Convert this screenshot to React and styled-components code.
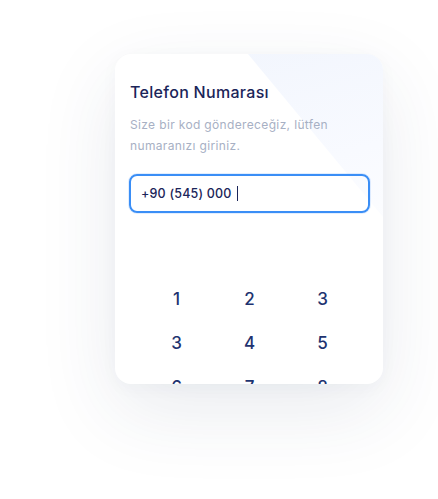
import React from "react";
import styled, { createGlobalStyle } from "styled-components";

const Global = createGlobalStyle`
  html, body { margin: 0; padding: 0; background: #ffffff; }
  body { font-family: "Inter", "Noto Sans", sans-serif; -webkit-font-smoothing: antialiased; }
`;

const Stage = styled.div`
  width: 438px;
  height: 499px;
  box-sizing: border-box;
  padding: 54px 0 0 115px;
  overflow: hidden;
`;

const Card = styled.div`
  position: relative;
  width: 268px;
  height: 330px;
  box-sizing: border-box;
  padding: 28px 13px 0 14px;
  background: #ffffff;
  border-radius: 16px;
  box-shadow: 0 26px 80px rgba(40, 55, 100, 0.1), 0 4px 18px rgba(40, 55, 100, 0.03);
  overflow: hidden;
  display: flex;
  flex-direction: column;

  &::before {
    content: "";
    position: absolute;
    inset: 0;
    clip-path: polygon(133px 0, 100% 0, 100% 163px);
    background: linear-gradient(165deg, #f1f5fd 0%, #f8faff 40%, #ffffff 75%);
    pointer-events: none;
  }
`;

const Content = styled.div`
  position: relative;
  display: flex;
  flex-direction: column;
`;

const Title = styled.h1`
  margin: 0 0 0 1px;
  font-size: 16px;
  line-height: 20px;
  font-weight: 500;
  color: #1b2559;
  letter-spacing: 0.3px;
`;

const Subtitle = styled.p`
  margin: 12px 0 0 1px;
  font-size: 12px;
  line-height: 21px;
  font-weight: 400;
  color: #a7b0c4;
  letter-spacing: 0.35px;
  max-width: 220px;
`;

const Field = styled.div`
  margin-top: 18px;
  height: 39px;
  box-sizing: border-box;
  border: 2px solid #3a8ef6;
  border-radius: 8px;
  box-shadow: 0 0 0 1px rgba(58, 142, 246, 0.15);
  display: flex;
  align-items: center;
  padding-left: 10px;
  font-size: 12.5px;
  font-weight: 500;
  color: #1b2559;
  letter-spacing: 0.2px;
`;

const Caret = styled.span`
  display: inline-block;
  width: 1.5px;
  height: 15px;
  margin-left: 5px;
  background: #1b2559;
`;

const Keypad = styled.div`
  margin: 76px auto 0;
  width: 219px;
  display: grid;
  grid-template-columns: repeat(3, 1fr);
  grid-auto-rows: 44px;
`;

const Key = styled.div`
  display: flex;
  align-items: center;
  justify-content: center;
  height: 20px;
  font-size: 17px;
  font-weight: 500;
  color: #1e3370;
`;

const keys = ["1", "2", "3", "3", "4", "5", "6", "7", "8", "9", "0", "←"];

export default function App() {
  return (
    <>
      <Global />
      <Stage>
        <Card>
          <Content>
            <Title>Telefon Numarası</Title>
            <Subtitle>Size bir kod göndereceğiz, lütfen numaranızı giriniz.</Subtitle>
            <Field>
              +90 (545) 000
              <Caret />
            </Field>
            <Keypad>
              {keys.map((k, i) => (
                <Key key={i}>{k}</Key>
              ))}
            </Keypad>
          </Content>
        </Card>
      </Stage>
    </>
  );
}
